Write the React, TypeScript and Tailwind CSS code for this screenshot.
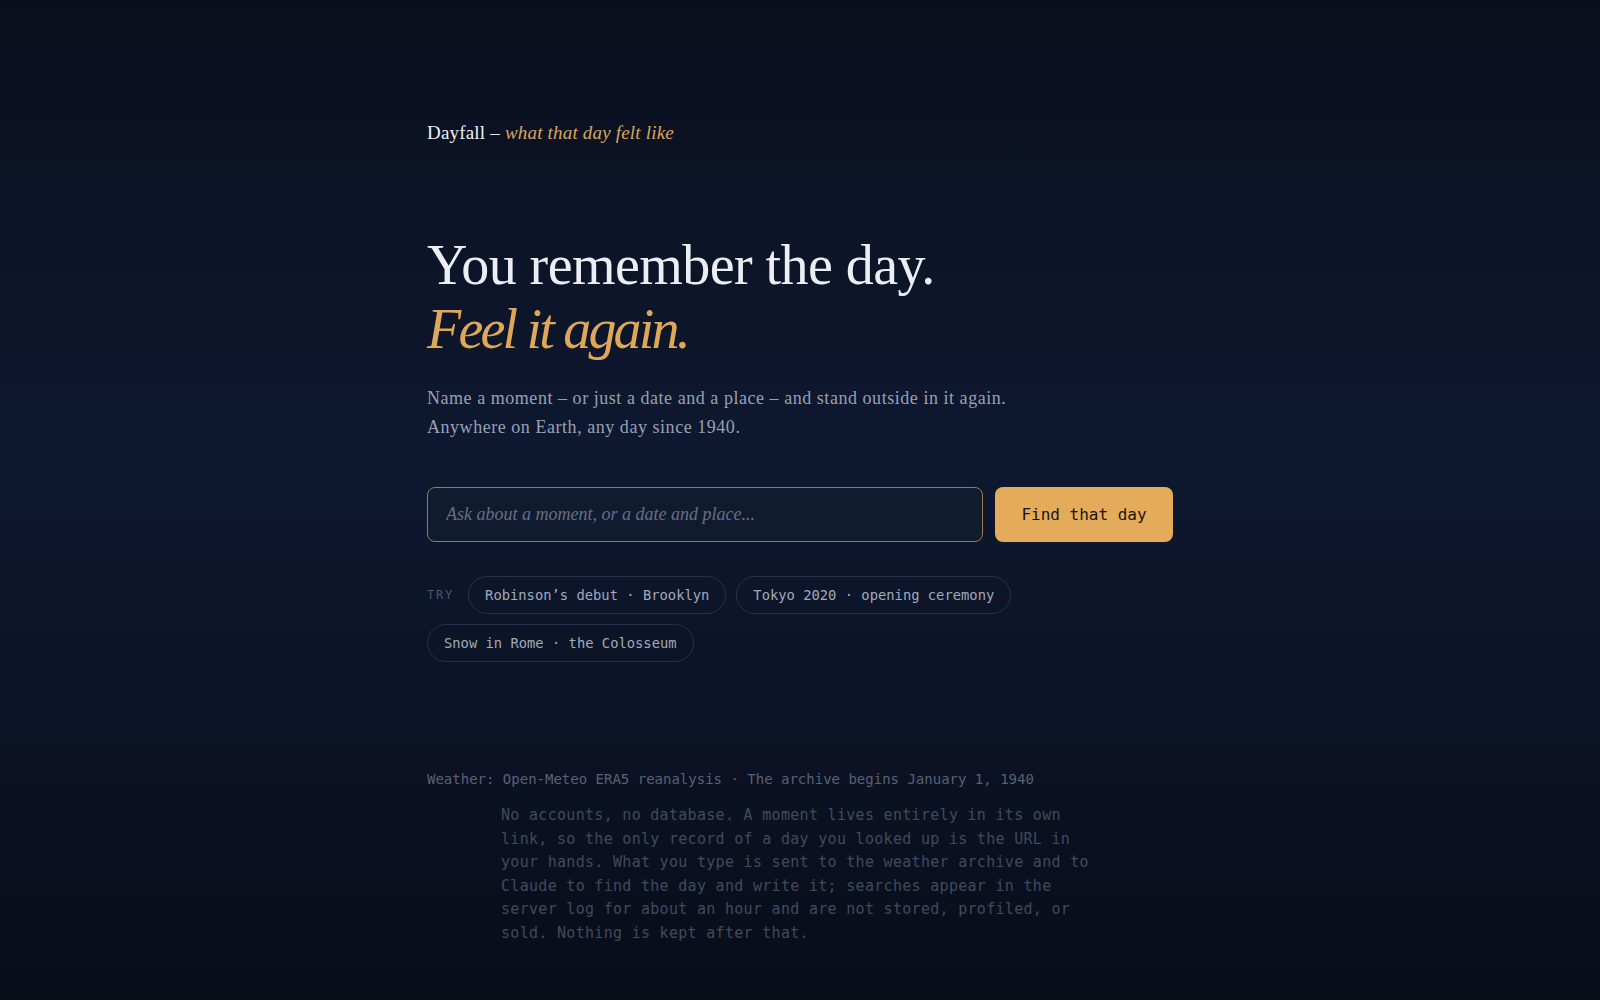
import React, { useState } from 'react';

const serif = "font-['Liberation_Serif','DejaVu_Serif',serif]";
const mono = "font-['DejaVu_Sans_Mono','Liberation_Mono',monospace]";

const examples = [
  'Robinson’s debut · Brooklyn',
  'Tokyo 2020 · opening ceremony',
  'Snow in Rome · the Colosseum',
];

export default function App() {
  const [query, setQuery] = useState('');

  return (
    <div className="min-h-screen w-full bg-[linear-gradient(180deg,#0a0f1d_0%,#0e1830_45%,#0c1326_70%,#080d18_100%)]">
      <div className="mx-auto w-[746px] pt-[119px] pb-[60px]">
        <header className={`${serif} text-[19px] leading-[28px] tracking-[0.01em] text-[#eef0f5]`}>
          Dayfall <span className="text-[#e9e4da]">–</span>{' '}
          <em className="text-[#dba65a]">what that day felt like</em>
        </header>

        <section className="mt-[86px]">
          <h1 className={`${serif} text-[56px] leading-[64px] font-normal tracking-[-0.01em] text-[#eceef3]`}>
            You remember the day.
            <br />
            <em className="tracking-[-0.05em] text-[#dfa858]">Feel it again.</em>
          </h1>
          <p className={`${serif} mt-[23px] text-[18px] leading-[28.5px] tracking-[0.03em] text-[#98a0b3]`}>
            Name a moment – or just a date and a place – and stand outside in it again.
            <br />
            Anywhere on Earth, any day since 1940.
          </p>

          <form className="mt-[46px] flex gap-3" onSubmit={(e) => e.preventDefault()}>
            <input
              value={query}
              onChange={(e) => setQuery(e.target.value)}
              placeholder="Ask about a moment, or a date and place..."
              className={`${serif} h-[55px] flex-1 rounded-lg border border-[#9c7a45] bg-[#111b30] px-[18px] text-[18px] italic text-[#e5e7eb] placeholder:text-[#666f82] focus:outline-none`}
            />
            <button
              type="submit"
              className={`${mono} h-[55px] w-[178px] rounded-lg bg-[#e3ab5a] text-[16px] font-medium text-[#16150f]`}
            >
              Find that day
            </button>
          </form>

          <div className="mt-[34px] flex flex-wrap items-center gap-2.5">
            <span className={`${mono} mr-1 text-[12px] tracking-[0.15em] text-[#4d576b]`}>TRY</span>
            {examples.map((ex) => (
              <button
                key={ex}
                onClick={() => setQuery(ex)}
                className={`${mono} h-[38px] rounded-full border border-[#283149] px-4 text-[13.8px] text-[#a1a9ba]`}
              >
                {ex}
              </button>
            ))}
          </div>
        </section>

        <footer className={`${mono} mt-[107px]`}>
          <p className="text-[14px] leading-[20px] text-[#586175]">
            Weather: Open-Meteo ERA5 reanalysis · The archive begins January 1, 1940
          </p>
          <p className="mx-auto mt-[15px] max-w-[598px] text-[15px] leading-[23.5px] tracking-[0.02em] text-[#414a5d]">
            No accounts, no database. A moment lives entirely in its own link, so the only record of a
            day you looked up is the URL in your hands. What you type is sent to the weather archive and
            to Claude to find the day and write it; searches appear in the server log for about an hour
            and are not stored, profiled, or sold. Nothing is kept after that.
          </p>
        </footer>
      </div>
    </div>
  );
}
